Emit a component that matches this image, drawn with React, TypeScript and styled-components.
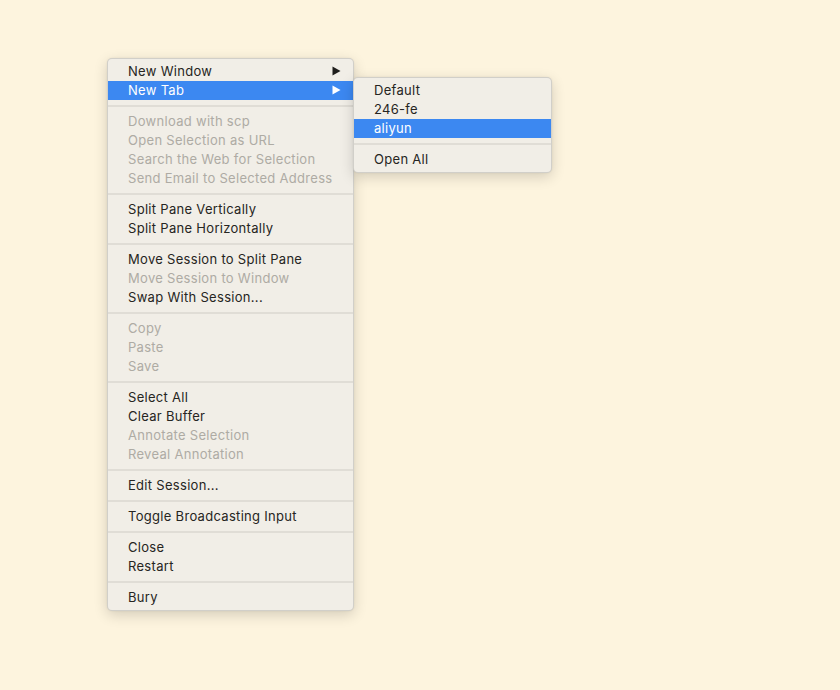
import React from "react";
import styled, { createGlobalStyle } from "styled-components";

const Global = createGlobalStyle`
  html, body { margin: 0; padding: 0; background: #fdf4de; }
  body { width: 840px; height: 690px; overflow: hidden; font-family: Inter, "Noto Sans", sans-serif; }
`;

const Page = styled.div`
  width: 840px;
  height: 690px;
  background: #fdf4de;
  padding: 58px 0 0 107px;
  box-sizing: border-box;
`;

const MenuWrap = styled.div`
  position: relative;
  width: 246px;
`;

const Menu = styled.div<{ $width: number }>`
  width: ${(p) => p.$width}px;
  box-sizing: border-box;
  background: #f1eee7;
  border: 1px solid rgba(0, 0, 0, 0.13);
  border-radius: 5px;
  padding: 3px 0;
  display: flex;
  flex-direction: column;
  box-shadow: 0 4px 14px rgba(0, 0, 0, 0.16), 0 0 2px rgba(0, 0, 0, 0.08);
`;

const Sub = styled(Menu)`
  position: absolute;
  left: 246px;
  top: 19px;
`;

const Item = styled.div<{ $active?: boolean; $disabled?: boolean }>`
  height: 19px;
  box-sizing: border-box;
  display: flex;
  align-items: center;
  justify-content: space-between;
  padding: 0 12px 1px 20px;
  font-size: 13px;
  letter-spacing: 0.3px;
  color: ${(p) => (p.$active ? "#ffffff" : p.$disabled ? "#aeaba4" : "#262522")};
  background: ${(p) => (p.$active ? "#3c88f1" : "transparent")};
  white-space: nowrap;
`;

const Sep = styled.div`
  height: 12px;
  display: flex;
  align-items: center;
  &::after {
    content: "";
    flex: 1;
    height: 2px;
    background: #e0ddd6;
  }
`;

const Arrow = ({ color }: { color: string }) => (
  <svg width="9" height="10" viewBox="0 0 9 10">
    <path d="M0.5 0.5 L8.5 5 L0.5 9.5 Z" fill={color} />
  </svg>
);

type Entry = { t: string; d?: boolean; a?: boolean; sub?: boolean } | "sep";

const mainItems: Entry[] = [
  { t: "New Window", sub: true },
  { t: "New Tab", sub: true, a: true },
  "sep",
  { t: "Download with scp", d: true },
  { t: "Open Selection as URL", d: true },
  { t: "Search the Web for Selection", d: true },
  { t: "Send Email to Selected Address", d: true },
  "sep",
  { t: "Split Pane Vertically" },
  { t: "Split Pane Horizontally" },
  "sep",
  { t: "Move Session to Split Pane" },
  { t: "Move Session to Window", d: true },
  { t: "Swap With Session..." },
  "sep",
  { t: "Copy", d: true },
  { t: "Paste", d: true },
  { t: "Save", d: true },
  "sep",
  { t: "Select All" },
  { t: "Clear Buffer" },
  { t: "Annotate Selection", d: true },
  { t: "Reveal Annotation", d: true },
  "sep",
  { t: "Edit Session..." },
  "sep",
  { t: "Toggle Broadcasting Input" },
  "sep",
  { t: "Close" },
  { t: "Restart" },
  "sep",
  { t: "Bury" },
];

const subItems: Entry[] = [
  { t: "Default" },
  { t: "246-fe" },
  { t: "aliyun", a: true },
  "sep",
  { t: "Open All" },
];

const renderItems = (items: Entry[]) =>
  items.map((e, i) =>
    e === "sep" ? (
      <Sep key={i} />
    ) : (
      <Item key={i} $active={e.a} $disabled={e.d}>
        <span>{e.t}</span>
        {e.sub && <Arrow color={e.a ? "#ffffff" : "#1f1e1c"} />}
      </Item>
    )
  );

export default function App() {
  return (
    <Page>
      <Global />
      <MenuWrap>
        <Menu $width={247}>{renderItems(mainItems)}</Menu>
        <Sub $width={199}>{renderItems(subItems)}</Sub>
      </MenuWrap>
    </Page>
  );
}
